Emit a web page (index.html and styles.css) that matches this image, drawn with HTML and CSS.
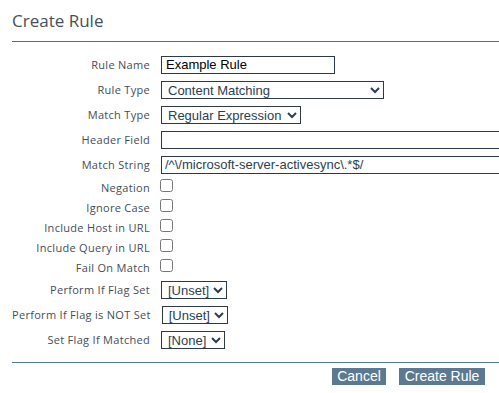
FILE: index.html
```html
<!DOCTYPE html>
<html>
<head>
<meta charset="utf-8">
<link rel="stylesheet" href="styles.css">
</head>
<body>
<div class="dialog">
  <h1 class="title">Create Rule</h1>
  <div class="divider top"></div>
  <form class="form">
    <div class="row"><label class="lbl">Rule Name</label><input class="text name" type="text" value="Example Rule"></div>
    <div class="row"><label class="lbl">Rule Type</label><select class="sel type"><option>Content Matching</option></select></div>
    <div class="row"><label class="lbl">Match Type</label><select class="sel match"><option>Regular Expression</option></select></div>
    <div class="row"><label class="lbl">Header Field</label><input class="text wide" type="text" value=""></div>
    <div class="row"><label class="lbl">Match String</label><input class="text wide slate" type="text" value="/^\/microsoft-server-activesync\.*$/"></div>
    <div class="row check"><label class="lbl">Negation</label><input class="cb" type="checkbox"></div>
    <div class="row check"><label class="lbl">Ignore Case</label><input class="cb" type="checkbox"></div>
    <div class="row check"><label class="lbl">Include Host in URL</label><input class="cb" type="checkbox"></div>
    <div class="row check"><label class="lbl">Include Query in URL</label><input class="cb" type="checkbox"></div>
    <div class="row check"><label class="lbl">Fail On Match</label><input class="cb" type="checkbox"></div>
    <div class="row"><label class="lbl">Perform If Flag Set</label><select class="sel flag"><option>[Unset]</option></select></div>
    <div class="row"><label class="lbl">Perform If Flag is NOT Set</label><select class="sel flag"><option>[Unset]</option></select></div>
    <div class="row"><label class="lbl">Set Flag If Matched</label><select class="sel none"><option>[None]</option></select></div>
  </form>
  <div class="divider bottom"></div>
  <div class="actions">
    <button class="btn cancel" type="button">Cancel</button>
    <button class="btn create" type="button">Create Rule</button>
  </div>
</div>
</body>
</html>
```
FILE: styles.css
```css
html, body {
  margin: 0;
  padding: 0;
  background: #ffffff;
  overflow: hidden;
}
.dialog {
  width: 499px;
  height: 393px;
  overflow: hidden;
}
.title {
  margin: 9px 0 9px 12px;
  font-family: "Open Sans", sans-serif;
  font-weight: 400;
  font-size: 17px;
  line-height: 23px;
  color: #46505a;
}
.divider {
  margin-left: 12px;
  height: 1px;
}
.divider.top { background: #5f6d79; }
.divider.bottom { background: #56788f; margin-top: 10px; }
.form {
  margin: 0;
  padding: 10px 0 0 12px;
}
.row {
  display: flex;
  align-items: center;
  height: 25px;
  gap: 11px;
}
.row.check { height: 20px; }
.lbl {
  flex: 0 0 138px;
  text-align: right;
  font-family: "Open Sans", sans-serif;
  font-size: 11px;
  letter-spacing: 0.3px;
  color: #444d57;
  white-space: nowrap;
}
.text {
  box-sizing: border-box;
  height: 18px;
  margin: 0;
  padding: 0 4px;
  border: 1px solid #2c3a48;
  border-radius: 0;
  font-family: "Liberation Sans", Arial, sans-serif;
  font-size: 13px;
  color: #000;
  outline: none;
}
.text.name { width: 174px; }
.text.wide { flex: 0 0 400px; width: 400px; }
.text.slate { color: #2c3e50; padding-left: 3px; }
.sel {
  box-sizing: border-box;
  height: 18px;
  margin: 0;
  padding: 0 0 0 2px;
  border: 1px solid #2c3a48;
  border-radius: 0;
  background-color: #fff;
  font-family: "Liberation Sans", Arial, sans-serif;
  font-size: 13px;
  color: #2c3e50;
}
.sel.type { width: 223px; }
.sel.match { width: 140px; }
.sel.flag { width: 66px; }
.sel.none { width: 64px; }
.cb {
  margin: -4px 0 0 -1px;
  width: 13px;
  height: 13px;
}
.actions {
  display: flex;
  justify-content: flex-end;
  gap: 13px;
  padding: 5px 14px 0 0;
}
.btn {
  height: 17px;
  margin: 0;
  padding: 0;
  border: none;
  border-radius: 0;
  background: #5b7a91;
  color: #ffffff;
  font-family: "Liberation Sans", Arial, sans-serif;
  font-size: 14px;
  line-height: 17px;
  white-space: nowrap;
  text-align: center;
}
.btn.cancel { width: 54px; }
.btn.create { width: 86px; }
```
